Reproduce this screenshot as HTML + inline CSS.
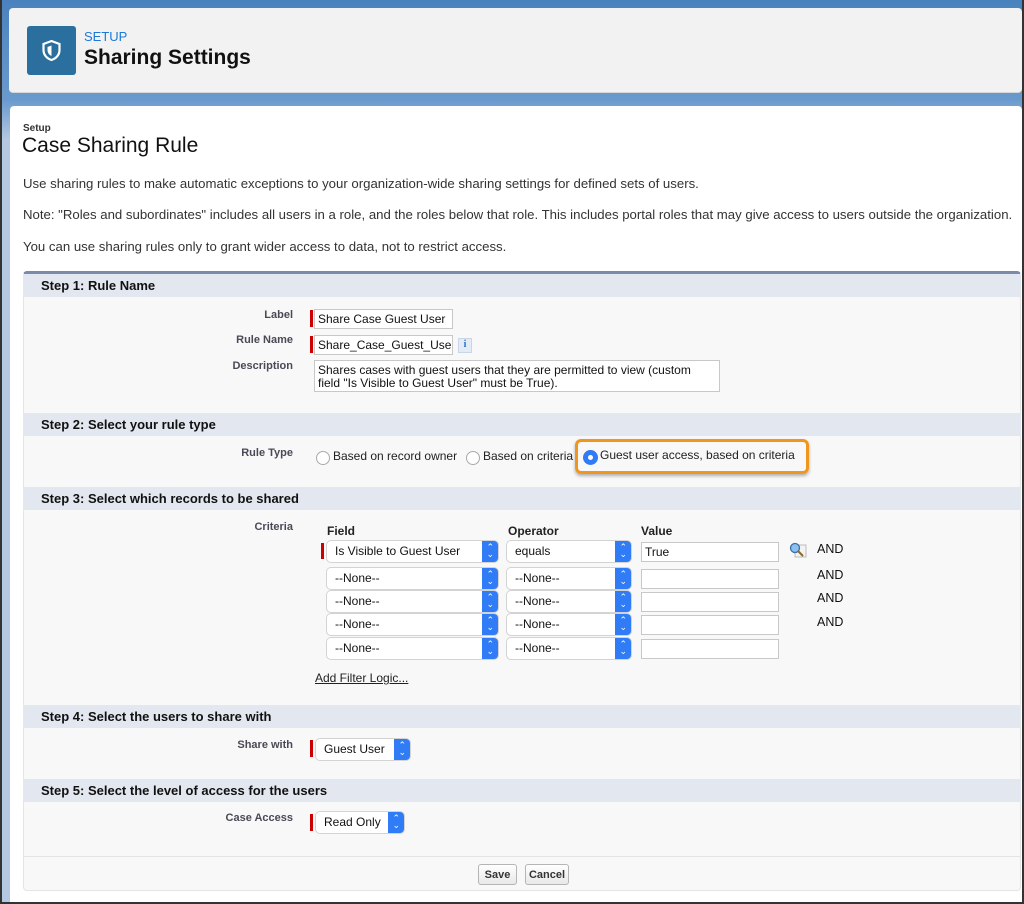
<!DOCTYPE html>
<html><head><meta charset="utf-8"><style>
*{box-sizing:border-box;margin:0;padding:0}
body{width:1024px;height:904px;overflow:hidden;font-family:"Liberation Sans",Arial,sans-serif;background:#2f6aa8;position:relative;color:#222}
.a{position:absolute}
.bg{left:0;top:0;width:1024px;height:904px;background:linear-gradient(#4a82be,#6a9acd 100px,#b4c8e2 140px,#b4c8e2)}
.hdr{left:9px;top:8px;width:1013px;height:85px;background:#f2f2f2;border-radius:4px;border-bottom:1px solid #d8d8d8}
.icon{left:27px;top:26px;width:49px;height:49px;background:#2a6f9e;border-radius:3px}
.card{left:10px;top:106px;width:1012px;height:796px;background:#fff;border-radius:4px 4px 0 0}
.lbl{font-size:11px;font-weight:bold;color:#4a4a56;text-align:right;width:200px}
.sh{left:23px;width:998px;height:23px;background:#e3e7ef;font-size:13px;font-weight:bold;color:#111;padding:4px 0 0 18px}
.inp{height:20px;background:#fff;border:1px solid #c8c8c8;font-size:12px;padding:2px 3px;color:#111;white-space:nowrap;overflow:hidden}
.req{width:3px;background:#c00}
.sel{height:21px;background:#fff;border-radius:4px;box-shadow:0 0 0 1px #d3d3d3;font-size:12px;padding:3px 8px;color:#111}
.sel:after{content:"";position:absolute;right:0;top:0;width:16px;height:21px;background:#2f7cf6;border-radius:0 4px 4px 0}
.sel i{position:absolute;right:4px;top:3px;color:#fff;font-style:normal;font-size:9px;line-height:7px;z-index:2;text-align:center}
.radio{width:14px;height:14px;border-radius:50%;border:1px solid #aaa;background:#fff}
.and{font-size:12.5px;color:#111}
.btn{height:21px;border:1px solid #b5b5b5;border-radius:3px;background:linear-gradient(#fff,#e8e8e8);font-size:11px;font-weight:bold;padding:4px 0;text-align:center;color:#333}
.p{left:23px;font-size:13.2px;color:#333;white-space:nowrap}
</style></head><body>
<div class="a bg"></div>
<div class="a" style="left:0;top:0;width:2px;height:904px;background:#333"></div>
<div class="a hdr"></div>
<div class="a icon"><svg width="49" height="49" viewBox="0 0 49 49"><path d="M24.5 15l8 3v6c0 5-3.5 8.5-8 10-4.5-1.5-8-5-8-10v-6z" fill="none" stroke="#fff" stroke-width="2.2"/><path d="M24.5 19.5v10.5c-2.5-1-4-3.5-4-6v-3z" fill="#fff"/></svg></div>
<div class="a" style="left:84px;top:29px;font-size:13px;color:#1b7ad8">SETUP</div>
<div class="a" style="left:84px;top:46px;font-size:21px;font-weight:bold;color:#111">Sharing Settings</div>
<div class="a card"></div>
<div class="a" style="left:1022px;top:0;width:2px;height:904px;background:#333"></div>
<div class="a" style="left:0;top:902px;width:1024px;height:2px;background:#333"></div>
<div class="a" style="left:23px;top:123px;font-size:10px;font-weight:bold;color:#333">Setup</div>
<div class="a" style="left:22px;top:134px;font-size:21px;color:#111">Case Sharing Rule</div>
<div class="a p" style="top:176px">Use sharing rules to make automatic exceptions to your organization-wide sharing settings for defined sets of users.</div>
<div class="a p" style="top:207px">Note: "Roles and subordinates" includes all users in a role, and the roles below that role. This includes portal roles that may give access to users outside the organization.</div>
<div class="a p" style="top:239px">You can use sharing rules only to grant wider access to data, not to restrict access.</div>
<div class="a" style="left:23px;top:271px;width:998px;height:620px;background:#f8f8f8;border-top:3px solid #7a8aa8;border-radius:4px;border-left:1px solid #e4e4e4;border-right:1px solid #e4e4e4;border-bottom:1px solid #e4e4e4"></div>
<div class="a" style="left:24px;top:856px;width:996px;height:1px;background:#e4e4e4"></div>

<div class="a sh" style="top:274px">Step 1: Rule Name</div>
<div class="a lbl" style="left:93px;top:309px">Label</div>
<div class="a req" style="left:310px;top:310px;height:17px"></div>
<div class="a inp" style="left:314px;top:309px;width:139px">Share Case Guest User</div>
<div class="a lbl" style="left:93px;top:334px">Rule Name</div>
<div class="a req" style="left:310px;top:336px;height:17px"></div>
<div class="a inp" style="left:314px;top:335px;width:139px">Share_Case_Guest_User</div>
<div class="a" style="left:458px;top:338px;width:14px;height:15px;background:#e3ecf6;border:1px solid #c8d6e8;font-size:10px;font-weight:bold;color:#2a6fc0;text-align:center;font-family:'Liberation Serif',serif">i</div>
<div class="a lbl" style="left:93px;top:360px">Description</div>
<div class="a inp" style="left:314px;top:360px;width:406px;height:32px;line-height:13px;padding-top:3px;white-space:normal">Shares cases with guest users that they are permitted to view (custom field "Is Visible to Guest User" must be True).</div>

<div class="a sh" style="top:413px">Step 2: Select your rule type</div>
<div class="a lbl" style="left:93px;top:447px">Rule Type</div>
<div class="a radio" style="left:316px;top:451px"></div>
<div class="a" style="left:333px;top:449px;font-size:12px">Based on record owner</div>
<div class="a radio" style="left:466px;top:451px"></div>
<div class="a" style="left:483px;top:449px;font-size:12px">Based on criteria</div>
<div class="a" style="left:575px;top:439px;width:234px;height:35px;border:3px solid #f0961e;border-radius:6px;box-shadow:0 2px 3px rgba(0,0,0,.3)"></div>
<div class="a" style="left:583px;top:450px;width:15px;height:15px;border-radius:50%;background:#2f7cf6"><div class="a" style="left:5px;top:5px;width:5px;height:5px;border-radius:50%;background:#fff"></div></div>
<div class="a" style="left:600px;top:448px;font-size:12px">Guest user access, based on criteria</div>

<div class="a sh" style="top:487px">Step 3: Select which records to be shared</div>
<div class="a lbl" style="left:93px;top:521px">Criteria</div>
<div class="a" style="left:327px;top:524px;font-size:12px;font-weight:bold">Field</div>
<div class="a" style="left:508px;top:524px;font-size:12px;font-weight:bold">Operator</div>
<div class="a" style="left:641px;top:524px;font-size:12px;font-weight:bold">Value</div>
<div class="a req" style="left:321px;top:543px;height:16px"></div>
<div class="a sel" style="left:327px;top:541px;width:171px">Is Visible to Guest User<i>⌃<br>⌄</i></div>
<div class="a sel" style="left:507px;top:541px;width:124px">equals<i>⌃<br>⌄</i></div>
<div class="a inp" style="left:641px;top:542px;width:138px">True</div>
<svg class="a" style="left:789px;top:542px" width="18" height="16"><rect x="6" y="3" width="11" height="12" fill="#f3f3f3" stroke="#bbb"/><circle cx="6" cy="6" r="4.5" fill="#8ec0ee" stroke="#3a6fa8" stroke-width="1.3"/><path d="M9 9l5 5" stroke="#8a6a2a" stroke-width="2"/></svg>
<div class="a and" style="left:817px;top:542px">AND</div>
<div class="a sel" style="left:327px;top:568px;width:171px">--None--<i>⌃<br>⌄</i></div>
<div class="a sel" style="left:507px;top:568px;width:124px">--None--<i>⌃<br>⌄</i></div>
<div class="a inp" style="left:641px;top:569px;width:138px"></div>
<div class="a and" style="left:817px;top:568px">AND</div>
<div class="a sel" style="left:327px;top:591px;width:171px">--None--<i>⌃<br>⌄</i></div>
<div class="a sel" style="left:507px;top:591px;width:124px">--None--<i>⌃<br>⌄</i></div>
<div class="a inp" style="left:641px;top:592px;width:138px"></div>
<div class="a and" style="left:817px;top:591px">AND</div>
<div class="a sel" style="left:327px;top:614px;width:171px">--None--<i>⌃<br>⌄</i></div>
<div class="a sel" style="left:507px;top:614px;width:124px">--None--<i>⌃<br>⌄</i></div>
<div class="a inp" style="left:641px;top:615px;width:138px"></div>
<div class="a and" style="left:817px;top:615px">AND</div>
<div class="a sel" style="left:327px;top:638px;width:171px">--None--<i>⌃<br>⌄</i></div>
<div class="a sel" style="left:507px;top:638px;width:124px">--None--<i>⌃<br>⌄</i></div>
<div class="a inp" style="left:641px;top:639px;width:138px"></div>
<div class="a" style="left:315px;top:671px;font-size:12px;text-decoration:underline;color:#222">Add Filter Logic...</div>

<div class="a sh" style="top:705px">Step 4: Select the users to share with</div>
<div class="a lbl" style="left:93px;top:739px">Share with</div>
<div class="a req" style="left:310px;top:740px;height:17px"></div>
<div class="a sel" style="left:316px;top:739px;width:94px">Guest User<i>⌃<br>⌄</i></div>

<div class="a sh" style="top:779px">Step 5: Select the level of access for the users</div>
<div class="a lbl" style="left:93px;top:812px">Case Access</div>
<div class="a req" style="left:310px;top:814px;height:17px"></div>
<div class="a sel" style="left:316px;top:812px;width:88px">Read Only<i>⌃<br>⌄</i></div>

<div class="a btn" style="left:478px;top:864px;width:39px">Save</div>
<div class="a btn" style="left:525px;top:864px;width:44px">Cancel</div>
</body></html>
